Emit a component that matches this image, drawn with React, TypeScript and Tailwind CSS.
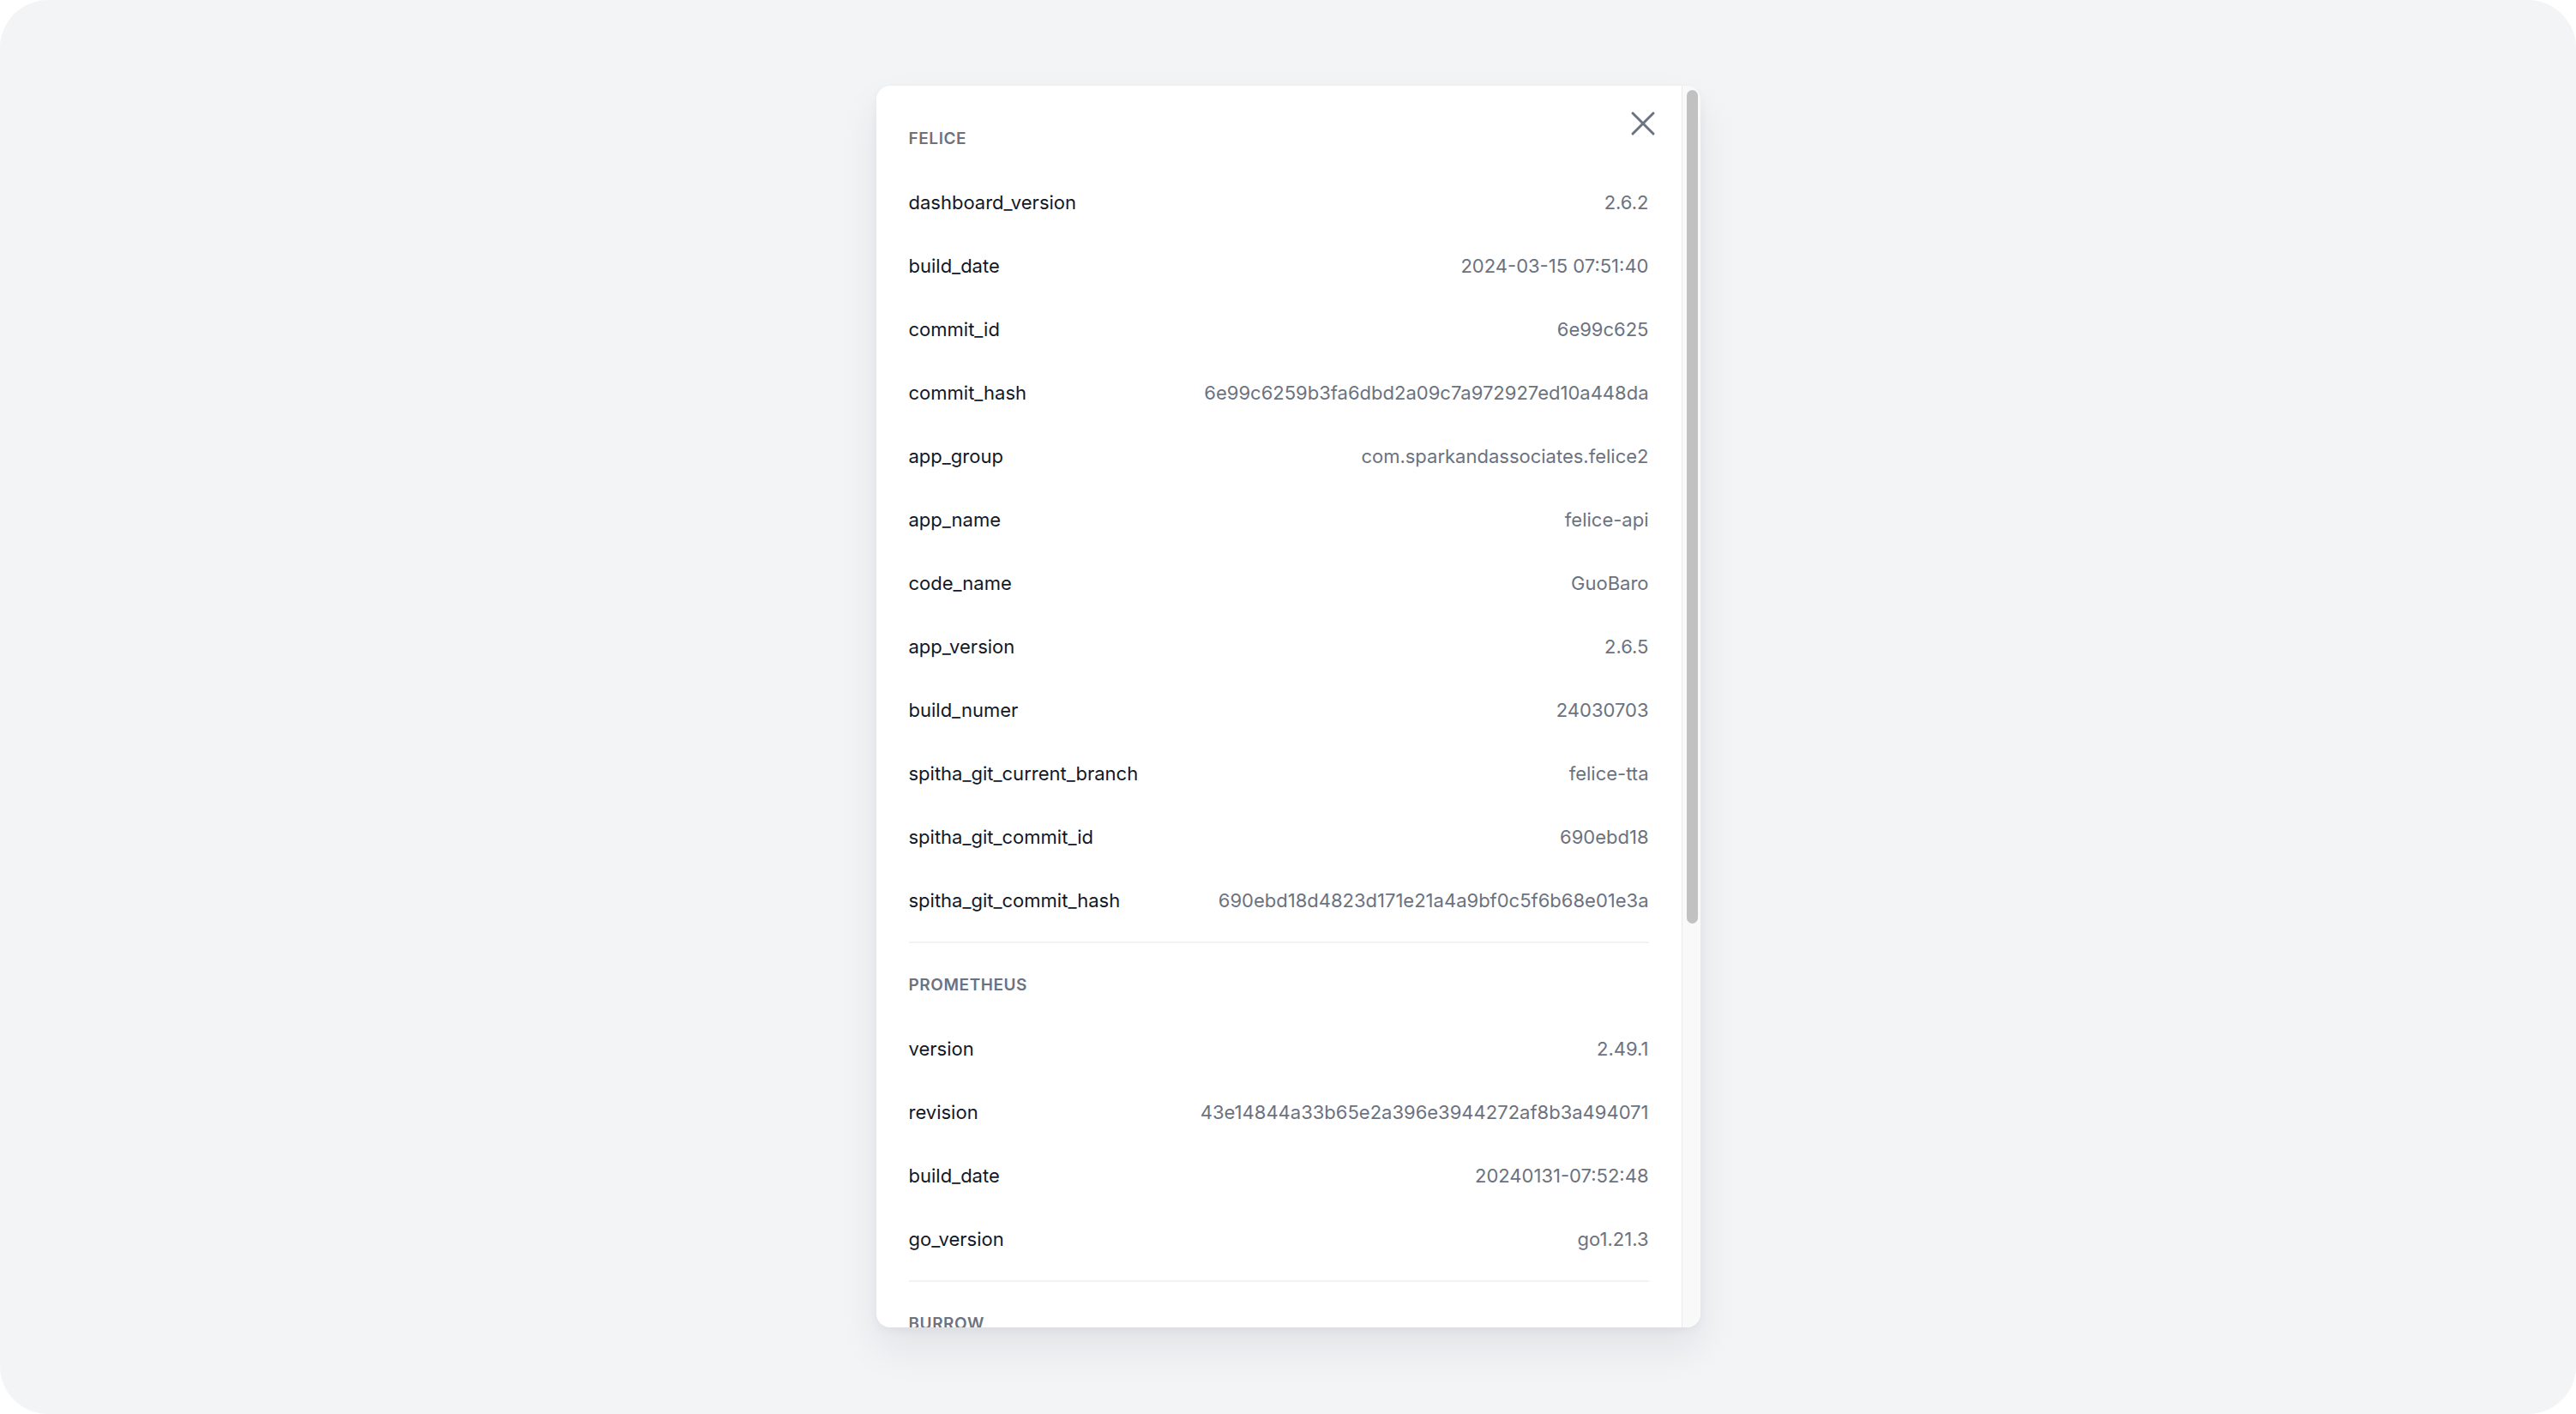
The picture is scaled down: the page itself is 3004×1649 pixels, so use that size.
import { X } from 'lucide-react';

interface Section {
  title: string;
  rows: Array<[string, string]>;
}

const sections: Section[] = [
  {
    title: 'Felice',
    rows: [
      ['dashboard_version', '2.6.2'],
      ['build_date', '2024-03-15 07:51:40'],
      ['commit_id', '6e99c625'],
      ['commit_hash', '6e99c6259b3fa6dbd2a09c7a972927ed10a448da'],
      ['app_group', 'com.sparkandassociates.felice2'],
      ['app_name', 'felice-api'],
      ['code_name', 'GuoBaro'],
      ['app_version', '2.6.5'],
      ['build_numer', '24030703'],
      ['spitha_git_current_branch', 'felice-tta'],
      ['spitha_git_commit_id', '690ebd18'],
      ['spitha_git_commit_hash', '690ebd18d4823d171e21a4a9bf0c5f6b68e01e3a'],
    ],
  },
  {
    title: 'Prometheus',
    rows: [
      ['version', '2.49.1'],
      ['revision', '43e14844a33b65e2a396e3944272af8b3a494071'],
      ['build_date', '20240131-07:52:48'],
      ['go_version', 'go1.21.3'],
    ],
  },
  {
    title: 'Burrow',
    rows: [
      ['version', '1.7.0'],
      ['go_version', 'go1.21.3'],
    ],
  },
];

export default function App() {
  return (
    <div className="h-screen w-screen bg-white font-['Inter',sans-serif]">
      <div className="flex h-full w-full items-start justify-center rounded-[56px] bg-[#f3f4f6] pt-[100px]">
        <div className="flex h-[1448px] w-[961px] overflow-hidden rounded-2xl bg-white shadow-[0_24px_48px_rgba(17,24,39,0.08),0_4px_12px_rgba(17,24,39,0.04)]">
          <div className="relative flex-1 overflow-hidden px-[38px] pt-[25px]">
            <button className="absolute right-[21px] top-[20px] text-[#6b7280]">
              <X size={48} strokeWidth={1.5} />
            </button>

            {sections.map((section, i) => (
              <div key={section.title}>
                {i > 0 && <div className="mb-[12px] mt-[11px] h-[2px] bg-[#f2f3f6]" />}
                <div className="flex h-[74px] items-center text-[19px] font-semibold uppercase tracking-[0.03em] text-[#6b7280]">
                  {section.title}
                </div>
                {section.rows.map(([key, value]) => (
                  <div key={key} className="flex h-[74px] items-center justify-between text-[22px]">
                    <span className="text-[#111827]">{key}</span>
                    <span className="text-[#6b7280]">{value}</span>
                  </div>
                ))}
              </div>
            ))}
          </div>

          <div className="w-[22px] shrink-0 border-l border-[#ebebeb] bg-[#f9f9f9] pt-[5px]">
            <div className="ml-[5px] h-[972px] w-[13px] rounded-full bg-[#c1c1c1]" />
          </div>
        </div>
      </div>
    </div>
  );
}
